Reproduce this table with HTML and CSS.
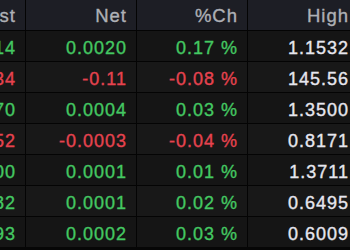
FILE: index.html
```html
<!DOCTYPE html>
<html>
<head>
<meta charset="utf-8">
<link rel="stylesheet" href="styles.css">
</head>
<body>
<div class="board">
  <div class="row head">
    <div class="cell">Last</div>
    <div class="cell">Net</div>
    <div class="cell">%Ch</div>
    <div class="cell">High</div>
  </div>
  <div class="row">
    <div class="cell up">1.1514</div>
    <div class="cell up">0.0020</div>
    <div class="cell up">0.17 %</div>
    <div class="cell hi">1.1532</div>
  </div>
  <div class="row">
    <div class="cell down">145.34</div>
    <div class="cell down">-0.11</div>
    <div class="cell down">-0.08 %</div>
    <div class="cell hi">145.56</div>
  </div>
  <div class="row">
    <div class="cell up">1.3470</div>
    <div class="cell up">0.0004</div>
    <div class="cell up">0.03 %</div>
    <div class="cell hi">1.3500</div>
  </div>
  <div class="row">
    <div class="cell down">0.8152</div>
    <div class="cell down">-0.0003</div>
    <div class="cell down">-0.04 %</div>
    <div class="cell hi">0.8171</div>
  </div>
  <div class="row">
    <div class="cell up">1.3700</div>
    <div class="cell up">0.0001</div>
    <div class="cell up">0.01 %</div>
    <div class="cell hi">1.3711</div>
  </div>
  <div class="row">
    <div class="cell up">0.6482</div>
    <div class="cell up">0.0001</div>
    <div class="cell up">0.02 %</div>
    <div class="cell hi">0.6495</div>
  </div>
  <div class="row">
    <div class="cell up">0.5993</div>
    <div class="cell up">0.0002</div>
    <div class="cell up">0.03 %</div>
    <div class="cell hi">0.6009</div>
  </div>
</div>
</body>
</html>
```
FILE: styles.css
```css
html, body {
  margin: 0;
  padding: 0;
  background: #060606;
  overflow: hidden;
}

.board {
  display: grid;
  grid-template-columns: repeat(4, 110px);
  grid-auto-rows: 30px;
  gap: 1px;
  margin-left: -85px;
  width: max-content;
  background: #040404;
  font-family: "Liberation Sans", Arial, sans-serif;
  font-size: 18px;
  letter-spacing: 1px;
  -webkit-text-stroke: 0.35px currentColor;
}

.row {
  display: contents;
}

.cell {
  box-sizing: border-box;
  padding: 4px 9px 0 0;
  line-height: 26px;
  text-align: right;
  white-space: nowrap;
  background: #151515;
}

.row:nth-child(odd) .cell {
  background: #181818;
}

.row.head .cell {
  background: #1d1e25;
  color: #aeb0b5;
  padding-top: 2px;
  line-height: 28px;
  font-size: 18.5px;
}

.up {
  color: #44c862;
}

.down {
  color: #e6434f;
}

.hi {
  color: #e6e6ee;
}
```
